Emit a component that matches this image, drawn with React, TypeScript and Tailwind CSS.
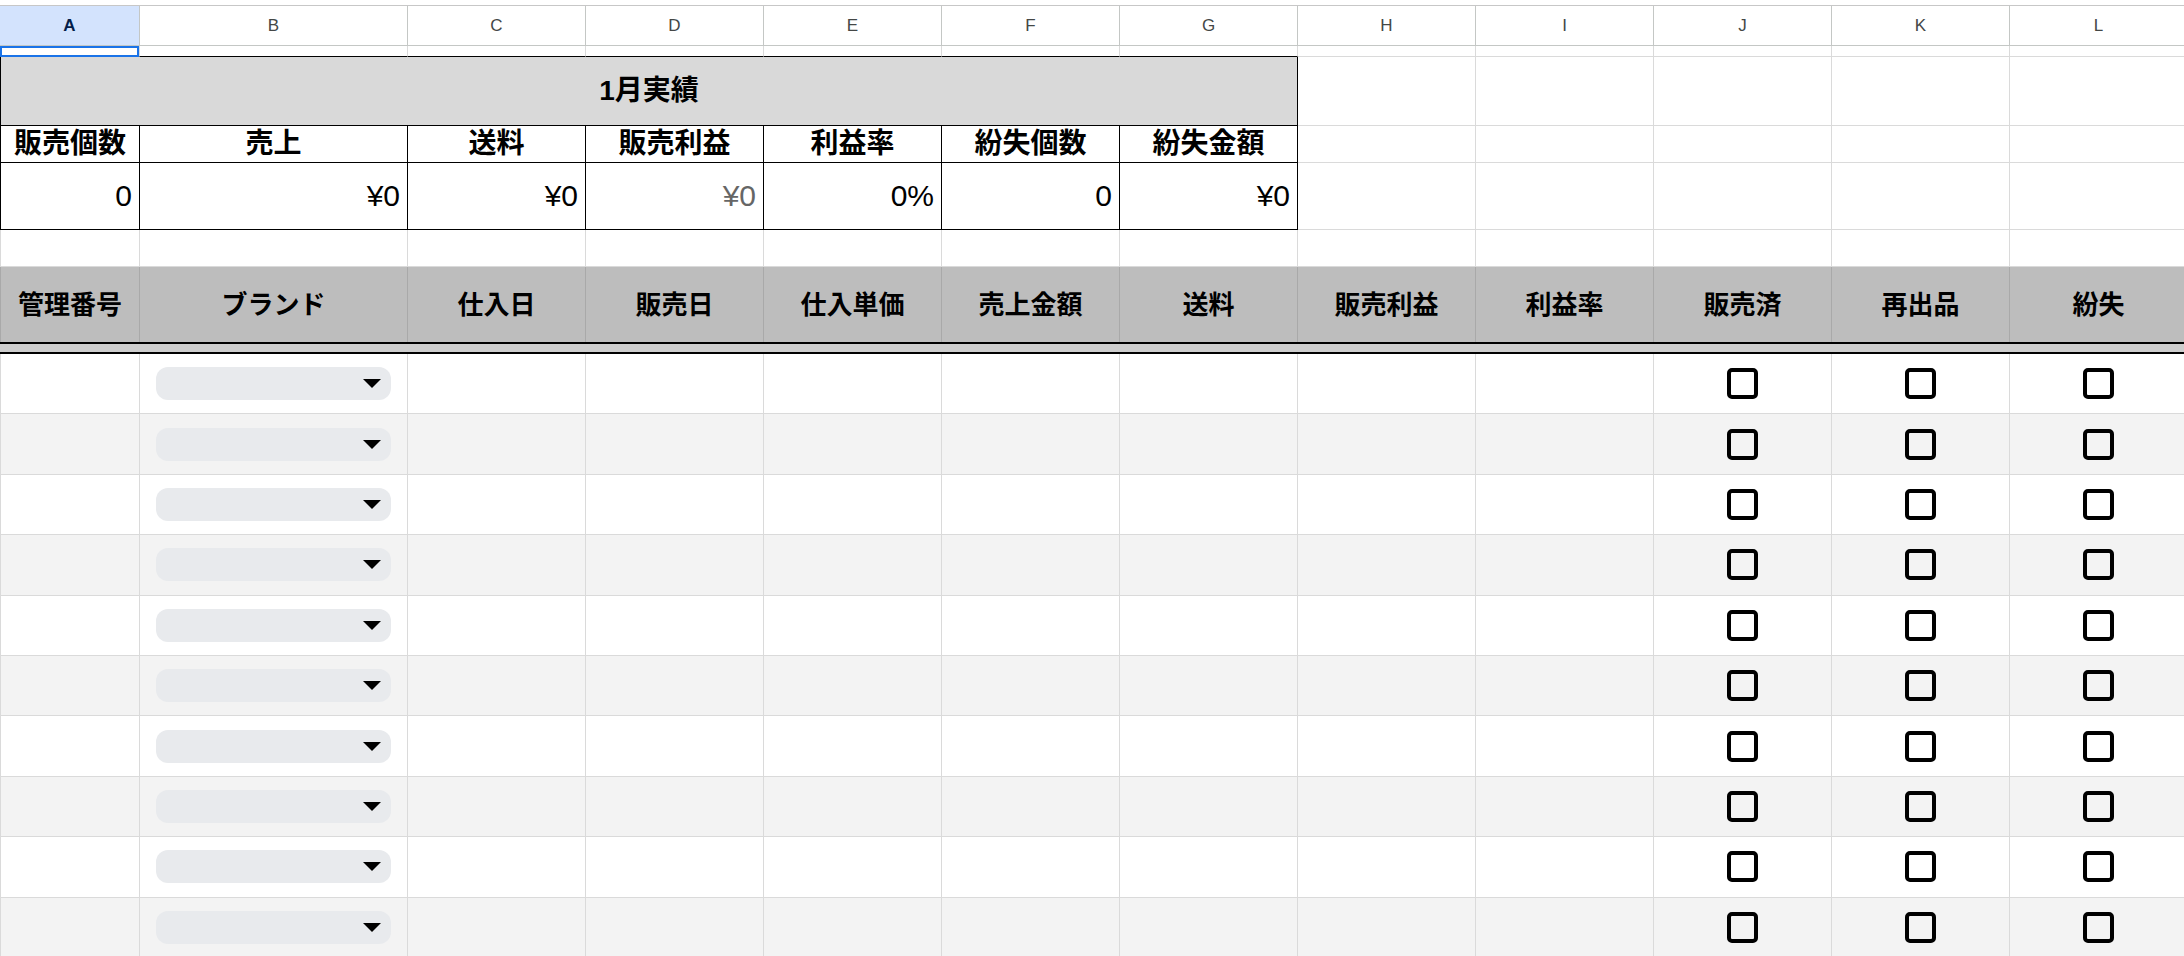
import React from "react";

const COLS = "grid grid-cols-[140px_268px_repeat(10,178px)]";

const LETTERS = ["A", "B", "C", "D", "E", "F", "G", "H", "I", "J", "K", "L"];

const SUMMARY_HEADERS = ["販売個数", "売上", "送料", "販売利益", "利益率", "紛失個数", "紛失金額"];
const SUMMARY_VALUES = ["0", "¥0", "¥0", "¥0", "0%", "0", "¥0"];

const TABLE_HEADERS = [
  "管理番号",
  "ブランド",
  "仕入日",
  "販売日",
  "仕入単価",
  "売上金額",
  "送料",
  "販売利益",
  "利益率",
  "販売済",
  "再出品",
  "紛失",
];

const GRID = "border-r border-b border-[#dadada]";

const LightCells = ({ count }: { count: number }) => (
  <>
    {Array.from({ length: count }).map((_, i) => (
      <div key={i} className={GRID} />
    ))}
  </>
);

const BrandSelect = () => (
  <div className="ml-[16px] w-[235px] h-[33px] rounded-[12px] bg-[#e8eaed] flex items-center justify-end pr-[10px]">
    <svg width="18" height="9" viewBox="0 0 18 9">
      <polygon points="0,0 18,0 9,9" fill="#000" />
    </svg>
  </div>
);

const Checkbox = () => <div className="w-[31px] h-[31px] border-[4px] border-black rounded-[5px]" />;

export default function App() {
  return (
    <div className="w-[2184px] h-[956px] overflow-hidden bg-white text-black font-['Liberation_Sans','Noto_Sans_CJK_JP',sans-serif]">
      {/* toolbar edge */}
      <div className="h-[6px] border-b border-[#c7c7c7]" />

      {/* column letters */}
      <div className={`${COLS} h-[40px] border-b border-[#c4c7c5]`}>
        {LETTERS.map((l, i) => (
          <div
            key={l}
            className={
              i === 0
                ? "bg-[#d3e3fd] border-r border-[#c4c7c5] flex items-center justify-center text-[17px] font-bold text-[#041e49]"
                : "border-r border-[#c4c7c5] flex items-center justify-center text-[17px] text-[#444746]"
            }
          >
            {l}
          </div>
        ))}
      </div>

      {/* row 1 */}
      <div className={`${COLS} h-[11px]`}>
        <div className="relative border-r border-b border-b-black border-r-[#dadada]">
          <div className="absolute left-0 right-0 top-0 -bottom-[1px] border-2 border-[#1a73e8]" />
        </div>
        {Array.from({ length: 6 }).map((_, i) => (
          <div key={i} className="border-r border-b border-r-[#dadada] border-b-black" />
        ))}
        <LightCells count={5} />
      </div>

      {/* 1月実績 title */}
      <div className={`${COLS} h-[69px]`}>
        <div className="col-span-7 bg-[#d9d9d9] border-l border-r border-b border-black flex items-center justify-center text-[28px] font-bold leading-none">
          1月実績
        </div>
        <LightCells count={5} />
      </div>

      {/* summary headers */}
      <div className={`${COLS} h-[37px]`}>
        {SUMMARY_HEADERS.map((h, i) => (
          <div
            key={h}
            className={`${i === 0 ? "border-l" : ""} border-r border-b border-black flex items-center justify-center text-[28px] font-bold leading-none whitespace-nowrap`}
          >
            {h}
          </div>
        ))}
        <LightCells count={5} />
      </div>

      {/* summary values */}
      <div className={`${COLS} h-[67px]`}>
        {SUMMARY_VALUES.map((v, i) => (
          <div
            key={i}
            className={`${i === 0 ? "border-l" : ""} border-r border-b border-black flex items-center justify-end pr-[7px] text-[30px] leading-none ${
              i === 3 ? "text-[#666666]" : "text-black"
            }`}
          >
            {v}
          </div>
        ))}
        <LightCells count={5} />
      </div>

      {/* empty row */}
      <div className={`${COLS} h-[37px]`}>
        <div className={`${GRID} border-l`} />
        <LightCells count={11} />
      </div>

      {/* table header */}
      <div className={`${COLS} h-[75px] bg-[#bdbdbd]`}>
        {TABLE_HEADERS.map((h, i) => (
          <div
            key={h}
            className={`${i === 0 ? "border-l" : ""} border-r border-[#a9a9a9] flex items-center justify-center text-[26px] font-bold leading-none whitespace-nowrap`}
          >
            {h}
          </div>
        ))}
      </div>
      <div className="h-[2px] bg-black" />
      <div className="h-[8px] bg-[#cdcdcd]" />
      <div className="h-[2px] bg-black" />

      {/* data rows */}
      {Array.from({ length: 10 }).map((_, r) => (
        <div key={r} className={`${COLS} h-[60.4px] ${r % 2 === 1 ? "bg-[#f3f3f3]" : "bg-white"}`}>
          <div className={`${GRID} border-l`} />
          <div className={`${GRID} flex items-center`}>
            <BrandSelect />
          </div>
          <LightCells count={7} />
          {[0, 1, 2].map((c) => (
            <div key={c} className={`${GRID} flex items-center justify-center`}>
              <Checkbox />
            </div>
          ))}
        </div>
      ))}
    </div>
  );
}
